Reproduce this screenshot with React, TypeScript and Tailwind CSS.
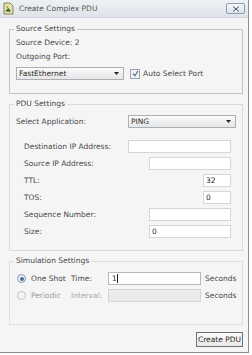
import React from "react";

const font = { fontFamily: '"DejaVu Sans", Verdana, sans-serif' };

function Combo({ value, width }: { value: string; width: string }) {
  return (
    <div
      className={`${width} h-[13px] flex items-center justify-between border border-[#a9b0b8] bg-gradient-to-b from-[#fbfbfb] to-[#e6e6e6] pl-[2px] pr-[4px]`}
    >
      <span className="leading-none text-[#2a2a2a]">{value}</span>
      <svg width="5" height="3" viewBox="0 0 5 3">
        <path d="M0 0h5L2.5 3z" fill="#222" />
      </svg>
    </div>
  );
}

function Field({ value, width }: { value?: string; width: string }) {
  return (
    <div
      className={`${width} h-[13px] flex items-center border border-[#d6d6d6] bg-white pl-[2px]`}
    >
      <span className="leading-none text-[#2a2a2a]">{value}</span>
    </div>
  );
}

function Row({ label, children }: { label: string; children: React.ReactNode }) {
  return (
    <div className="h-[13px] flex items-center pl-[8px]">
      <span className="leading-none">{label}</span>
      <div className="ml-auto mr-[11px] flex">{children}</div>
    </div>
  );
}

export default function App() {
  return (
    <div
      style={font}
      className="w-[249px] h-[353px] flex flex-col bg-[#f5f5f5] border-r border-b border-[#8c8c8c] text-[7.5px] text-[#484848]"
    >
      {/* title bar */}
      <div className="h-[18px] flex items-center bg-gradient-to-b from-[#eef1f4] to-[#dfe4ea] border-b border-[#cfd5dc] pl-[3px] pr-[3px]">
        <svg width="12" height="13" viewBox="0 0 12 13">
          <path d="M1 1h6l3 3v8H1z" fill="#e8e2b0" stroke="#6b6b3a" strokeWidth="0.8" />
          <path d="M3 3l5 6-2 1z" fill="#3f7d2a" />
          <path d="M2 9l3-2 1 3z" fill="#2f5f1f" />
        </svg>
        <span className="ml-[4px] text-[#555] leading-none">Create Complex PDU</span>
        <div className="ml-auto w-[19px] h-[11px] flex items-center justify-center border border-[#8d9db1] rounded-[2px] bg-gradient-to-b from-[#f4f6f9] to-[#dde3ea]">
          <svg width="8" height="6" viewBox="0 0 8 6">
            <path d="M1 0.5l6 5M7 0.5l-6 5" stroke="#4a5566" strokeWidth="1" />
          </svg>
        </div>
      </div>

      <div className="flex flex-col pl-[9px] pr-[5px]">
        {/* source settings */}
        <fieldset className="mt-[6px] border border-[#c4c4c4] pb-[13px]">
          <legend className="ml-[4px] px-[2px] leading-[10px]">Source Settings</legend>
          <div className="flex flex-col pl-[6px]">
            <div className="mt-[4px] leading-[10px]">Source Device: 2</div>
            <div className="mt-[4px] leading-[10px]">Outgoing Port:</div>
            <div className="mt-[5px] flex items-center">
              <Combo value="FastEthernet" width="w-[108px]" />
              <div className="ml-[6px] w-[10px] h-[10px] flex items-center justify-center border border-[#9aa4b0] bg-[#f3f3f3]">
                <svg width="7" height="7" viewBox="0 0 7 7">
                  <path d="M1 3.5l2 2.2L6 0.8" stroke="#5b6f8f" strokeWidth="1.2" fill="none" />
                </svg>
              </div>
              <span className="ml-[3px] leading-none">Auto Select Port</span>
            </div>
          </div>
        </fieldset>

        {/* PDU settings */}
        <fieldset className="mt-[5px] border border-[#dadada] pb-[12px]">
          <legend className="ml-[4px] px-[2px] leading-[10px]">PDU Settings</legend>
          <div className="flex flex-col pl-[6px]">
            <div className="mt-[6px] h-[13px] flex items-center">
              <span className="leading-none">Select Application:</span>
              <div className="ml-auto mr-[6px]">
                <Combo value="PING" width="w-[108px]" />
              </div>
            </div>
            <div className="mt-[12px] flex flex-col gap-[4px]">
              <Row label="Destination IP Address:">
                <Field width="w-[103px]" />
              </Row>
              <Row label="Source IP Address:">
                <Field width="w-[82px]" />
              </Row>
              <Row label="TTL:">
                <Field value="32" width="w-[28px]" />
              </Row>
              <Row label="TOS:">
                <Field value="0" width="w-[28px]" />
              </Row>
              <Row label="Sequence Number:">
                <Field width="w-[82px]" />
              </Row>
              <Row label="Size:">
                <Field value="0" width="w-[82px]" />
              </Row>
            </div>
          </div>
        </fieldset>

        {/* simulation settings */}
        <fieldset className="mt-[5px] border border-[#dedede] pb-[22px]">
          <legend className="ml-[4px] px-[2px] leading-[10px]">Simulation Settings</legend>
          <div className="flex flex-col pl-[7px] gap-[4px]">
            <div className="mt-[6px] h-[13px] flex items-center">
              <div className="w-[54px] flex items-center">
                <div className="w-[9px] h-[9px] rounded-full border border-[#8796a8] bg-[#eef1f4] flex items-center justify-center">
                  <div className="w-[4px] h-[4px] rounded-full bg-[#3f6fae]" />
                </div>
                <span className="ml-[5px] leading-none">One Shot</span>
              </div>
              <span className="w-[37px] leading-none">Time:</span>
              <div className="w-[93px] h-[13px] flex items-center border border-[#b9b9b9] bg-white pl-[3px]">
                <span className="leading-none text-[#2a2a2a]">1</span>
                <div className="w-px h-[9px] bg-[#222]" />
              </div>
              <span className="ml-[4px] leading-none">Seconds</span>
            </div>
            <div className="h-[13px] flex items-center">
              <div className="w-[54px] flex items-center">
                <div className="w-[9px] h-[9px] rounded-full border border-[#c2c2c2] bg-[#f4f4f4]" />
                <span className="ml-[5px] leading-none text-[#9a9a9a]">Periodic</span>
              </div>
              <span className="w-[37px] leading-none text-[#a8a8a8]">Interval:</span>
              <div className="w-[93px] h-[13px] border border-[#d4d4d4] bg-[#ebebeb]" />
              <span className="ml-[4px] leading-none">Seconds</span>
            </div>
          </div>
        </fieldset>

        <div className="mt-[7px] flex justify-end">
          <div className="w-[47px] h-[15px] flex items-center justify-center border border-[#707070] bg-gradient-to-b from-[#fafafa] to-[#e8e8e8] text-[#2a2a2a] leading-none">
            Create PDU
          </div>
        </div>
      </div>
    </div>
  );
}
